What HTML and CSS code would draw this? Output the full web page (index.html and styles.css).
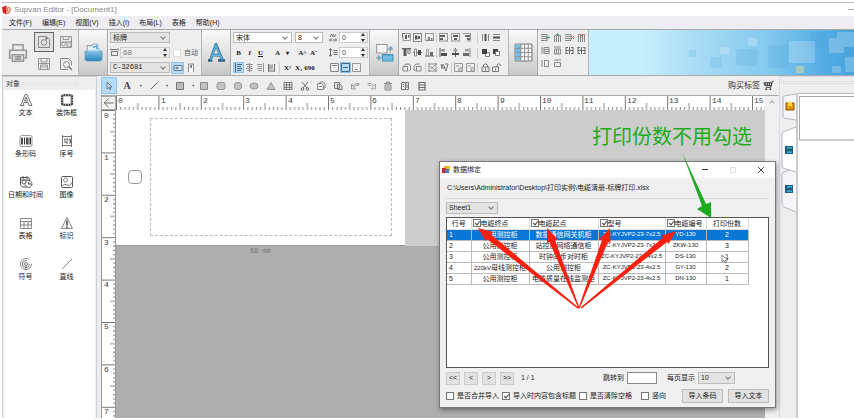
FILE: index.html
```html
<!DOCTYPE html>
<html lang="zh-CN">
<head>
<meta charset="utf-8">
<title>Supvan Editor - [Document1]</title>
<link rel="stylesheet" href="styles.css">
</head>
<body>
<svg class="sprite" aria-hidden="true">
  <defs>
    <linearGradient id="blue" x1="0" y1="0" x2="0" y2="1"><stop offset="0" stop-color="#7cc4e8"/><stop offset="1" stop-color="#2a84bd"/></linearGradient>
    <symbol id="printer" viewBox="0 0 18 18"><path d="M4.5 6V1.5h9V6M3 13.500H1.500V6.500h15v7H15M4 10.500h10v6H4zM6 12.500h6M6 14.500h6" fill="none" stroke="#888" stroke-width="1.400"/></symbol>
    <symbol id="new" viewBox="0 0 14 14"><path d="M1.500 1.500h8l3 3v8h-11z" fill="none" stroke="#777"/><circle cx="7" cy="7.500" r="2.800" fill="none" stroke="#777"/><path d="M8 3.500h3M9.500 2v3" stroke="#777"/></symbol>
    <symbol id="saveas" viewBox="0 0 14 14"><path d="M1.500 1.500h11v11h-11zM4 1.500v3h6v-3M1.500 7h11" fill="none" stroke="#888"/><circle cx="4.500" cy="9" r="2" fill="none" stroke="#888"/><rect x="8" y="7" width="4" height="5" fill="#ddd" stroke="#888"/></symbol>
    <symbol id="save" viewBox="0 0 14 14"><path d="M1.500 1.500h11v11h-11zM4 1.500v3.500h6V1.500M3.500 12V8h7v4M4 10h6M1.500 6.500h11" fill="none" stroke="#888"/></symbol>
    <symbol id="preview" viewBox="0 0 14 14"><path d="M9 12.500H1.500v-11h8l3 3V8" fill="none" stroke="#777"/><circle cx="7.500" cy="7.500" r="3" fill="none" stroke="#777"/><path d="M9.500 9.500l3.500 3.500" stroke="#666" stroke-width="1.400"/></symbol>
    <symbol id="open" viewBox="0 0 18 18"><path d="M3 9V2.500h4L9 1h3v8" fill="#eef4f7" stroke="#8ba6b5"/><path d="M8 3l6-1-1 2 3 4-3-1-2-3-2 1z" fill="#64b5de"/><path d="M1 8h16v7q0 2-2 2H3q-2 0-2-2z" fill="url(#blue)" stroke="#4285aa" stroke-width=".6"/><path d="M3 8l2-2h9l1 2" fill="#b8dff2"/></symbol>
    <symbol id="bigA" viewBox="0 0 18 18"><path d="M1 16.500h4M10.500 16.500H17M3.200 16L8.500 1.500 14.500 16M5 11.500h7" fill="none" stroke="#2c6283" stroke-width="2.600"/><path d="M3.200 16L8.500 2l6 14M5 11.500h7" fill="none" stroke="#56b5e2" stroke-width="1.500"/></symbol>
    <symbol id="swap" viewBox="0 0 18 18"><path d="M1.500 1.500h10v8h-10zM11.500 6H17M14.500 3v6" fill="#f5f5f5" stroke="#999"/><path d="M7 11h10v6H7z" fill="#72bee4" stroke="#428fb5"/><path d="M1 14h5M3.500 11.500v5" stroke="#888"/><path d="M13 5l2-2 2 2-2 2zM2 14l2-2 2 2-2 2z" fill="#5eafd5"/></symbol>
    <symbol id="bigtable" viewBox="0 0 18 18"><rect x="1" y="1" width="16" height="16" rx="1" fill="#f4f4f4" stroke="#777"/><path d="M1.500 1.500h5v15h-5z" fill="#6fc0e8"/><path d="M1 5h16M1 9h16M1 13h16M6.500 1v16M10 1v16M13.500 1v16" stroke="#888" stroke-width=".8"/></symbol>
    <symbol id="width" viewBox="0 0 9 9"><path d="M1.500 3.500h6v4h-6zM1 1.500h7M1 .5v2M8 .5v2" fill="none" stroke="#666"/></symbol>
    <symbol id="landscape" viewBox="0 0 10 10"><path d="M1 2.500h8v5H1z" fill="#d9eefb" stroke="#567"/><path d="M2.500 5h3" stroke="#345" stroke-width="1.500"/></symbol>
    <symbol id="portrait" viewBox="0 0 10 10"><path d="M2.500 9V1h5v8" fill="#fff" stroke="#777"/><path d="M5 2v3" stroke="#345" stroke-width="1.500"/></symbol>
    <symbol id="tl" viewBox="0 0 9 9"><path d="M.5 4.500v-4h4" fill="none" stroke="#555"/><path d="M3 .5h5.500v7H1v-4" fill="none" stroke="#888"/><path d="M3 2h2v4H3zM6 2h1.500v2.500H6z" fill="#444"/></symbol>
    <symbol id="tc" viewBox="0 0 9 9"><rect x=".5" y=".5" width="8" height="8" fill="none" stroke="#777"/><path d="M2 2.500h2.500v4H2zM5 3h2v3H5z" fill="#444"/></symbol>
    <symbol id="tb" viewBox="0 0 9 9"><rect x=".5" y=".5" width="8" height="7" fill="none" stroke="#888"/><path d="M3 4h2v4H3zM6 5h1.500v3H6z" fill="#666"/></symbol>
    <symbol id="at" viewBox="0 0 9 9"><path d="M0 .8h9" stroke="#444" stroke-width="1.400"/><path d="M1.500 1v7h3V1" fill="#444"/><path d="M6 1.500h2v4H6z" fill="none" stroke="#777"/></symbol>
    <symbol id="am" viewBox="0 0 9 9"><path d="M0 4.500h9" stroke="#444"/><path d="M1.500 1h2v7h-2z" fill="#fff" stroke="#777"/><path d="M5 2h3v5H5z" fill="#333"/></symbol>
    <symbol id="ab" viewBox="0 0 9 9"><path d="M0 8h9" stroke="#444"/><path d="M1.500 1.500h2V8h-2z" fill="none" stroke="#888"/><path d="M5 4h3v4H5z" fill="#555"/></symbol>
    <symbol id="al" viewBox="0 0 9 9"><path d="M1 0v9" stroke="#444"/><path d="M2 1h4v2.500H2z" fill="#888"/><path d="M2 5h6v3H2z" fill="#333"/></symbol>
    <symbol id="ac" viewBox="0 0 9 9"><path d="M4.500 0v9" stroke="#444"/><path d="M2.500 1h4v2.500h-4z" fill="#999"/><path d="M1 5h7v2H1z" fill="#333"/></symbol>
    <symbol id="ar" viewBox="0 0 9 9"><path d="M8 0v9" stroke="#777"/><path d="M3 1h4v2.500H3z" fill="#999"/><path d="M1 5h6v3H1z" fill="#555"/></symbol>
    <symbol id="bl" viewBox="0 0 9 9"><rect x=".5" y=".5" width="8" height="7.500" fill="none" stroke="#888"/><path d="M1 2h5v2H1zM1 5h3v2H1z" fill="#444"/></symbol>
    <symbol id="bc" viewBox="0 0 9 9"><rect x=".5" y=".5" width="8" height="7.500" fill="none" stroke="#888"/><path d="M2 2h5v2H2zM3 5h3v2H3z" fill="#444"/></symbol>
    <symbol id="br" viewBox="0 0 9 9"><path d="M.5 .5h8V8h-4" fill="none" stroke="#888"/><path d="M3 2h5v2H3zM5 5h3v2H5z" fill="#555"/></symbol>
    <symbol id="dh" viewBox="0 0 9 9"><path d="M1.500 1v7M7.500 1v7" stroke="#777"/><path d="M4.500 1v7" stroke="#333" stroke-width="2"/></symbol>
    <symbol id="dv" viewBox="0 0 9 9"><path d="M1 1.500h7M1 7.500h7" stroke="#777"/><path d="M1 4.500h7" stroke="#333" stroke-width="2"/></symbol>
    <symbol id="front" viewBox="0 0 9 9"><path d="M4.500 4.500h4v4h-4z" fill="#fff" stroke="#666"/><path d="M1 1h5v5H1z" fill="#222"/></symbol>
    <symbol id="back" viewBox="0 0 9 9"><path d="M1 1h5v5H1z" fill="#222"/><path d="M3.500 3.500h4v4h-4z" fill="#fff" stroke="#666"/></symbol>
    <symbol id="rotl" viewBox="0 0 9 9"><path d="M1 3.500h4.500V8H1zM1.500 3L4 1h3l1.500 2v4l-2 1" fill="none" stroke="#777"/></symbol>
    <symbol id="rotr" viewBox="0 0 9 9"><path d="M3.500 3.500H8V8H3.500zM3 8L1 7V3l2-2h4" fill="none" stroke="#777"/></symbol>
    <symbol id="group" viewBox="0 0 9 9"><path d="M1 0v9M8 0v9M0 1h9M0 8h9M2 3l5 4M3 6l4-4" stroke="#777" fill="none" stroke-width=".9"/></symbol>
    <symbol id="ungroup" viewBox="0 0 9 9"><path d="M1 1l1 4 1-4 2 4M4 4l2 4 2-7M5 1h3M1 5h3" stroke="#666" fill="none"/></symbol>
    <symbol id="pic" viewBox="0 0 9 9"><path d="M.5 .5h8v8h-8zM5 5h3v3H5zM2 3h3" stroke="#888" fill="none"/></symbol>
    <symbol id="lock" viewBox="0 0 9 9"><path d="M1 4h7v4.500H1zM2.500 4V2q2-2.500 4 0v2M4.500 5.500v2" stroke="#555" fill="none" stroke-width=".9"/></symbol>
    <symbol id="unlock" viewBox="0 0 9 9"><path d="M.5 4h6v4.500h-6zM5 4V2q1.500-2.500 3.500 0v1M3.500 5.500v2" stroke="#555" fill="none" stroke-width=".9"/></symbol>
    <symbol id="rowins" viewBox="0 0 9 9"><path d="M0 1.500h6v2H0M0 7.500h6v-2H0" fill="none" stroke="#777"/><path d="M5 4.500h4M7 3v3" stroke="#388e6b"/></symbol>
    <symbol id="colins" viewBox="0 0 9 9"><path d="M1.500 9V2.500h2V9M7.500 9V2.500h-2V9" fill="none" stroke="#777"/><path d="M3 1.500h3M4.500 0v3" stroke="#388e6b"/></symbol>
    <symbol id="rowdel" viewBox="0 0 9 9"><path d="M0 1.500h6v2H0M0 7.500h6v-2H0" fill="none" stroke="#777"/><path d="M6 3l3 3M9 3L6 6" stroke="#b33"/></symbol>
    <symbol id="coldel" viewBox="0 0 9 9"><path d="M1.500 9V1.500h2V9M7.500 9V1.500h-2V9" fill="none" stroke="#777"/><path d="M3 1l3 3M6 1L3 4" stroke="#b33"/></symbol>
    <symbol id="rowsel" viewBox="0 0 9 9"><path d="M1 1v7M3 1.500h5v6H3zM3 3.500h5M3 5.500h5" fill="none" stroke="#777"/></symbol>
    <symbol id="colsel" viewBox="0 0 9 9"><path d="M1 1h7M1.500 3h6v5h-6zM3.500 3v5M5.500 3v5" fill="none" stroke="#777"/></symbol>
    <symbol id="merge" viewBox="0 0 9 9"><path d="M1 1v7M8 1v7M4.500 1v7M1 4.500h7M1 1.500h2M6 1.500h2M1 7.500h2M6 7.500h2" fill="none" stroke="#555"/></symbol>
    <symbol id="roww" viewBox="0 0 9 9"><path d="M1 1v7M3.500 1.500h4v6h-4z" fill="none" stroke="#777"/></symbol>
    <symbol id="colw" viewBox="0 0 9 9"><path d="M1 1h7M1.500 3.500h6v4h-6z" fill="none" stroke="#777"/></symbol>
    <symbol id="left" viewBox="0 0 9 9"><path d="M1.500 0v9M3 1.500h5M3 3.500h4M3 5.500h5M3 7.500h4" stroke="#357"/></symbol>
    <symbol id="center" viewBox="0 0 9 9"><path d="M4.500 0v9M1 1.500h7M2 3.500h5M1 5.500h7M2 7.500h5" stroke="#777" stroke-width=".9"/></symbol>
    <symbol id="right" viewBox="0 0 9 9"><path d="M7.500 0v9M1 1.500h5M2 3.500h4M1 5.500h5M2 7.500h4" stroke="#777" stroke-width=".9"/></symbol>
    <symbol id="just" viewBox="0 0 9 9"><path d="M1.500 1v7.500M7.500 1v7.500M3 1.500v5M5 1.500v5M1 8h7" stroke="#555" fill="none"/></symbol>
    <symbol id="kern" viewBox="0 0 9 9"><path d="M1 4l1.500-3L4 4M4 1l1.500 3L7 1M0 7h8M2 5.500L.5 7 2 8.500M6 5.500L7.500 7 6 8.500" stroke="#555" fill="none" stroke-width=".9"/></symbol>
    <symbol id="lead" viewBox="0 0 9 9"><path d="M1.500 1v7M0 2.500l1.500-2 1.500 2M0 6.500l1.500 2 1.500-2M4.500 2.500h4M4.500 4.500h4M4.500 6.500h4" stroke="#555" fill="none"/></symbol>
    <symbol id="vt" viewBox="0 0 9 9"><path d="M.5 .5h8v8h-8zM2 2.500h5" stroke="#777" fill="none"/></symbol>
    <symbol id="vm" viewBox="0 0 9 9"><path d="M.5 .5h8v8h-8zM2 4.500h5" stroke="#357" fill="none"/></symbol>
    <symbol id="vb" viewBox="0 0 9 9"><path d="M.5 .5h8v8h-8zM3 6.500h3" stroke="#888" fill="none"/></symbol>
    <symbol id="cursor" viewBox="0 0 10 10"><path d="M3 1v7l1.500-1.500L6 9l1-1-1.500-2H8z" fill="#cde" stroke="#567" stroke-width=".8"/></symbol>
    <symbol id="line" viewBox="0 0 10 10"><path d="M1.500 8.500l7-7" stroke="#666"/></symbol>
    <symbol id="square" viewBox="0 0 10 10"><path d="M1.500 1.500h7v7h-7z" fill="#bbb" stroke="#777"/></symbol>
    <symbol id="round" viewBox="0 0 10 10"><rect x="1" y="1.500" width="8" height="7" rx="2" fill="#bbb" stroke="#888"/></symbol>
    <symbol id="circle" viewBox="0 0 10 10"><circle cx="5" cy="5" r="3.700" fill="#bbb" stroke="#888"/></symbol>
    <symbol id="ellipse" viewBox="0 0 10 10"><ellipse cx="5" cy="5" rx="4" ry="3" fill="#bbb" stroke="#888"/></symbol>
    <symbol id="tri" viewBox="0 0 10 10"><path d="M5 1.500l4 7H1z" fill="#bbb" stroke="#888"/></symbol>
    <symbol id="grid" viewBox="0 0 10 10"><path d="M1 1.500h8v7H1zM1 4h8M1 6.500h8M3.500 1.500v7M6.500 1.500v7" fill="none" stroke="#666"/></symbol>
    <symbol id="cut" viewBox="0 0 10 10"><path d="M2 1l5 6M8 1L3 7" stroke="#555"/><circle cx="2.500" cy="8" r="1.300" fill="none" stroke="#555"/><circle cx="7.500" cy="8" r="1.300" fill="none" stroke="#555"/></symbol>
    <symbol id="copy" viewBox="0 0 10 10"><path d="M1.500 2.500h4l2 2v4h-6zM4 2V1h3l2 2v4H8M3 5.500h3" fill="none" stroke="#777"/></symbol>
    <symbol id="paste" viewBox="0 0 10 10"><path d="M1.500 1.500h5v6h-5zM4.500 3.500h3l1.500 2v3H4.500z" fill="#ddd" stroke="#666"/></symbol>
    <symbol id="undo" viewBox="0 0 10 10"><path d="M1.500 3v5h4L4 6.500Q5 4 9 4V2.500Q4.500 2 3 5z" fill="#ddd" stroke="#777" stroke-width=".8"/></symbol>
    <symbol id="redo" viewBox="0 0 10 10"><path d="M8.500 3v5h-4L6 6.500Q5 4 1 4V2.500Q5.500 2 7 5z" fill="#eee" stroke="#888" stroke-width=".8"/></symbol>
    <symbol id="trash" viewBox="0 0 10 10"><path d="M1 2.500h8M3.500 2V1h3v1M2 4h6v5H2zM4 5v3M6 5v3" fill="none" stroke="#777"/></symbol>
    <symbol id="form" viewBox="0 0 10 10"><path d="M1.500 1.500h7v7h-7zM5.500 1.500v7M3 3.500h1M3 5.500h1M7 3v4" fill="none" stroke="#666"/></symbol>
    <symbol id="stack" viewBox="0 0 10 10"><path d="M2 1.500h6v7.500H2zM2 4h6M2 6.500h6" fill="none" stroke="#555" stroke-width="1.200"/></symbol>
    <symbol id="cart" viewBox="0 0 12 12"><path d="M11.500 1.500H10L8.500 8H3M1 3h8.500L9 6H2zM3 3v3M5 3v3M7 3v3" fill="none" stroke="#333"/><circle cx="3.500" cy="10" r="1" fill="#333"/><circle cx="8" cy="10" r="1" fill="#333"/></symbol>
    <symbol id="o-text" viewBox="0 0 14 14"><path d="M1 12.500h4L4.500 11 5 9.500h4l1 3h3L8 1.500H6L2.500 11zM5.500 8L7 4l1.500 4z" fill="#f4f4f4" stroke="#666" stroke-width=".9"/></symbol>
    <symbol id="o-frame" viewBox="0 0 14 14"><rect x="2" y="2" width="10" height="10" rx="1.500" fill="none" stroke="#444" stroke-width="2.200" stroke-dasharray="2 .6"/><rect x="3" y="3" width="8" height="8" fill="#fff" stroke="#666" stroke-width=".6"/></symbol>
    <symbol id="o-bar" viewBox="0 0 14 14"><rect x="1" y="1.500" width="12" height="11" rx="1.500" fill="none" stroke="#999"/><path d="M3 3.500v7M8 3.500v7" stroke="#222" stroke-width="1.600"/><path d="M5.500 3.500v7M10 3.500v7M11.500 3.500v7" stroke="#333"/></symbol>
    <symbol id="o-serial" viewBox="0 0 14 14"><path d="M2 2.500h10M2 11.500h10M2.500 1v12M11.500 1v12" stroke="#777"/><path d="M4 5h1v4M6 5h2L6 9h2M9 5h1.500v4H9M9 7h1" fill="none" stroke="#555" stroke-width=".9"/></symbol>
    <symbol id="o-date" viewBox="0 0 14 14"><path d="M9 12H4l-2.500-2V2.500h8l2 3M2 5h9M4 1v3M8 1v3" fill="none" stroke="#555"/><circle cx="5" cy="7" r="2" fill="none" stroke="#666"/><circle cx="9.500" cy="9" r="3.500" fill="#eee" stroke="#444" stroke-dasharray="2 .6"/><path d="M9.500 7v2H12" stroke="#444" fill="none"/></symbol>
    <symbol id="o-img" viewBox="0 0 14 14"><rect x="1.500" y="1.500" width="11" height="11" rx="1" fill="none" stroke="#555"/><circle cx="5.500" cy="5" r="2" fill="none" stroke="#888"/><path d="M2 11q3-3 5-1t5-2" fill="none" stroke="#777"/></symbol>
    <symbol id="o-table" viewBox="0 0 14 14"><path d="M1.500 2.500h11v10h-11zM1.500 5.500h11M1.500 9h11M5 5v7.500M9 5v7.500" fill="none" stroke="#888"/></symbol>
    <symbol id="o-sign" viewBox="0 0 14 14"><path d="M7 1.500l5.500 11h-11z" fill="#f8f8f8" stroke="#888"/><path d="M7 4.500v5M7 10.500v1.500" stroke="#444" stroke-width="1.500"/></symbol>
    <symbol id="o-symbol" viewBox="0 0 14 14"><circle cx="7" cy="7" r="5.500" fill="none" stroke="#888" stroke-dasharray="28 6"/><circle cx="7" cy="7" r="3.500" fill="none" stroke="#777" stroke-dasharray="17 5"/><circle cx="7" cy="7" r="1.500" fill="none" stroke="#777"/><path d="M7 8.500v4" stroke="#777"/></symbol>
    <symbol id="o-line" viewBox="0 0 14 14"><path d="M2 12L12 2" stroke="#888"/></symbol>
    <symbol id="chip" viewBox="0 0 9 9"><path d="M0 0h9v9H0z" fill="#155a80"/><path d="M2 1h6v7H2z" fill="#3faad3"/><circle cx="3.500" cy="4.500" r="1.200" fill="none" stroke="#133"/><circle cx="6.500" cy="4.500" r="1.200" fill="none" stroke="#133"/></symbol>
  </defs>
</svg>

<div class="app">
  <header class="titlebar">
    <svg class="logo" viewBox="0 0 10 10"><path d="M0 2L5 0v10L1 8z" fill="#d91f1f"/><path d="M5 1l4 1 1 3-2 4-3 1z" fill="#e97757"/><path d="M6 2l2 2-2 4" fill="none" stroke="#fff"/></svg>
    <span>Supvan Editor - [Document1]</span><i class="minimize"></i>
  </header>
  <nav class="menubar">
    <button>文件(F)</button><button>编辑(E)</button><button>视图(V)</button><button>插入(I)</button><button>布局(L)</button><button>表格</button><button>帮助(H)</button>
  </nav>

  <section class="ribbon">
    <div class="group print">
      <button class="big" aria-label="打印"><svg><use href="#printer"/></svg></button>
      <div class="files">
        <button class="framed" aria-label="新建"><svg><use href="#new"/></svg></button>
        <button aria-label="另存为"><svg><use href="#saveas"/></svg></button>
        <button aria-label="保存"><svg><use href="#save"/></svg></button>
        <button aria-label="预览"><svg><use href="#preview"/></svg></button>
      </div>
    </div>
    <button class="tile" aria-label="打开"><svg><use href="#open"/></svg></button>
    <div class="group doc">
      <span class="pick grey"><select aria-label="类型"><option>标牌</option></select></span>
      <div class="line">
        <svg class="ic"><use href="#width"/></svg>
        <span class="spin wide"><input type="text" value="68" aria-label="宽度"><i></i></span>
        <label class="auto"><input type="checkbox">自动</label>
      </div>
      <div class="line">
        <span class="pick grey mono"><select aria-label="型号"><option>C-32681</option></select></span>
        <button class="on orient" aria-label="横向"><svg><use href="#landscape"/></svg></button>
        <button class="orient" aria-label="纵向"><svg><use href="#portrait"/></svg></button>
      </div>
    </div>
    <button class="tile" aria-label="字体"><svg><use href="#bigA"/></svg></button>
    <div class="group font">
      <div class="line fonts">
        <span class="pick family"><select aria-label="字体"><option>宋体</option></select></span>
        <span class="pick size"><select aria-label="字号"><option>8</option></select></span>
      </div>
      <div class="line letters">
        <button>B</button><button class="it">I</button><button class="un">U</button><button class="gap">A</button><button class="dot">▾</button><button class="gap">A<sup>^</sup></button><button>A<sup>ˇ</sup></button>
      </div>
      <div class="line letters">
        <button class="on" aria-label="左对齐"><svg><use href="#left"/></svg></button><button aria-label="居中"><svg><use href="#center"/></svg></button><button aria-label="右对齐"><svg><use href="#right"/></svg></button><button aria-label="两端对齐"><svg><use href="#just"/></svg></button><i class="sep"></i><button>X<sup>²</sup></button><button>X<sub>₂</sub></button><button>690</button>
      </div>
    </div>
    <div class="group spacing">
      <div class="line"><svg class="ic"><use href="#kern"/></svg><span class="spin"><input type="text" value="0" aria-label="字间距"><i></i></span></div>
      <div class="line"><svg class="ic"><use href="#lead"/></svg><span class="spin"><input type="text" value="0" aria-label="行间距"><i></i></span></div>
      <div class="line letters"><button aria-label="顶部"><svg><use href="#vt"/></svg></button><button class="on" aria-label="中部"><svg><use href="#vm"/></svg></button><button aria-label="底部"><svg><use href="#vb"/></svg></button></div>
    </div>
    <button class="tile" aria-label="位置"><svg><use href="#swap"/></svg></button>
    <div class="group align">
      <div class="icons"><svg><use href="#tl"/></svg><svg><use href="#tc"/></svg><svg><use href="#tb"/></svg><i class="sep"></i><svg><use href="#bl"/></svg><svg><use href="#bc"/></svg><svg><use href="#br"/></svg><i class="sep far"></i><svg><use href="#dh"/></svg><svg><use href="#dv"/></svg></div>
      <div class="icons"><svg><use href="#at"/></svg><svg><use href="#am"/></svg><svg><use href="#ab"/></svg><i class="sep"></i><svg><use href="#al"/></svg><svg><use href="#ac"/></svg><svg><use href="#ar"/></svg><i class="sep far"></i><svg><use href="#front"/></svg><svg><use href="#back"/></svg></div>
      <div class="icons"><svg><use href="#rotl"/></svg><svg><use href="#rotr"/></svg><i class="sep"></i><svg><use href="#group"/></svg><svg><use href="#ungroup"/></svg><i class="sep"></i><svg><use href="#pic"/></svg><svg><use href="#pic"/></svg><i class="sep"></i><svg><use href="#lock"/></svg><svg><use href="#unlock"/></svg></div>
    </div>
    <button class="tile" aria-label="表格"><svg><use href="#bigtable"/></svg></button>
    <div class="group cells">
      <svg><use href="#rowins"/></svg><svg><use href="#colins"/></svg><svg><use href="#rowdel"/></svg><svg><use href="#coldel"/></svg>
      <svg><use href="#rowsel"/></svg><svg><use href="#colsel"/></svg><svg><use href="#merge"/></svg><svg><use href="#merge"/></svg>
      <svg><use href="#roww"/></svg><svg><use href="#colw"/></svg>
    </div>
    <div class="banner">
      <svg viewBox="0 0 265 45" preserveAspectRatio="xMaxYMid slice">
        <g fill="#3f9bd6" opacity=".16"><rect x="147" y="19" width="21" height="17" rx="2"/><rect x="121" y="27" width="12" height="11" rx="1"/><rect x="100" y="20" width="7" height="7" rx="1"/><rect x="179" y="15" width="21" height="23" rx="2"/><rect x="220" y="2" width="17" height="17" rx="2"/></g>
        <g fill="#fff" opacity=".22"><rect x="200" y="11" width="26" height="22" rx="2"/><rect x="159" y="8" width="9" height="8" rx="1"/><rect x="131" y="17" width="9" height="7" rx="1"/><rect x="240" y="8" width="15" height="15" rx="1"/><rect x="248" y="2" width="17" height="15" rx="1"/><rect x="256" y="27" width="11" height="15" rx="1"/><rect x="243" y="36" width="9" height="7" rx="1"/></g>
        <rect x="207" y="36" width="8" height="7" fill="#c8cfae" opacity=".7"/>
      </svg>
    </div>
  </section>

  <main class="work">
    <aside class="objects">
      <h2>对象<i></i></h2>
      <div class="list">
        <button><svg><use href="#o-text"/></svg>文本</button><button><svg><use href="#o-frame"/></svg>装饰框</button>
        <button><svg><use href="#o-bar"/></svg>条形码</button><button><svg><use href="#o-serial"/></svg>序号</button>
        <button><svg><use href="#o-date"/></svg>日期和时间</button><button><svg><use href="#o-img"/></svg>图像</button>
        <button><svg><use href="#o-table"/></svg>表格</button><button><svg><use href="#o-sign"/></svg>标识</button>
        <button><svg><use href="#o-symbol"/></svg>符号</button><button><svg><use href="#o-line"/></svg>直线</button>
      </div>
    </aside>

    <section class="editor">
      <div class="tools">
        <button class="on" aria-label="选择"><svg><use href="#cursor"/></svg></button>
        <div class="menus"><button class="serif">A</button><b>·</b><button aria-label="直线"><svg><use href="#line"/></svg></button><b>·</b><button aria-label="填充"><svg><use href="#square"/></svg></button><b>·</b></div>
        <div class="shapes">
          <svg><use href="#square"/></svg><svg><use href="#round"/></svg><svg><use href="#circle"/></svg><svg><use href="#ellipse"/></svg><svg><use href="#tri"/></svg><svg><use href="#grid"/></svg><svg><use href="#cut"/></svg><svg><use href="#copy"/></svg><svg><use href="#paste"/></svg><svg><use href="#undo"/></svg><svg><use href="#redo"/></svg><svg><use href="#trash"/></svg><svg><use href="#form"/></svg><svg><use href="#stack"/></svg>
        </div>
        <a class="buy" href="#">购买标签<svg><use href="#cart"/></svg></a>
      </div>
      <div class="stage">
        <svg class="corner" viewBox="0 0 14 14"><path d="M13 7H2M7 2L2 7l5 5" fill="none" stroke="#555"/></svg>
        <svg class="hruler">
          <defs><pattern id="hticks" width="42.400" height="14" patternUnits="userSpaceOnUse"><path d="M.5 0v14" stroke="#777"/><path d="M4.700 11v3M9 11v3M13.200 11v3M17.500 11v3M21.700 7v7M26 11v3M30.200 11v3M34.400 11v3M38.700 11v3" stroke="#888"/></pattern></defs>
          <rect width="100%" height="14" fill="url(#hticks)"/>
          <g><text x="2" y="7">0</text><text x="45" y="7">1</text><text x="87" y="7">2</text><text x="129" y="7">3</text><text x="172" y="7">4</text><text x="214" y="7">5</text><text x="256" y="7">6</text><text x="299" y="7">7</text><text x="341" y="7">8</text><text x="384" y="7">9</text><text x="426" y="7">10</text><text x="468" y="7">11</text><text x="511" y="7">12</text><text x="553" y="7">13</text><text x="596" y="7">14</text><text x="638" y="7">15</text></g>
        </svg>
        <svg class="vruler">
          <defs><pattern id="vticks" width="14" height="42.400" patternUnits="userSpaceOnUse"><path d="M0 .5h14" stroke="#777"/><path d="M11 4.700h3M11 9h3M11 13.200h3M11 17.500h3M8 21.700h6M11 26h3M11 30.200h3M11 34.400h3M11 38.700h3" stroke="#888"/></pattern></defs>
          <rect width="14" height="100%" fill="url(#vticks)"/>
          <g><text x="2" y="8">0</text><text x="2" y="50">1</text><text x="2" y="92">2</text><text x="2" y="135">3</text><text x="2" y="177">4</text><text x="2" y="219">5</text><text x="2" y="262">6</text><text x="2" y="304">7</text></g>
        </svg>
        <div class="canvas">
          <div class="sheet"><div class="page"><i class="hole"></i><div class="area"></div></div></div>
          <p class="measure">68 mm</p>
        </div>
        <div class="scroll"><i></i></div>
      </div>
    </section>

    <aside class="side">
      <i class="grip"></i>
      <div class="pane">
        <div class="tabs">
          <svg viewBox="0 0 15 126" preserveAspectRatio="none"><g fill="#f6f6f8" stroke="#b8b8be"><path d="M15 1L3 3q-1 0-1 2v18q0 2 1 2l12 2"/><path d="M15 75L3 79q-2 1-2 3v28q0 3 2 4l12 5"/><path d="M15 34L2 39q-1 0-1 3v29q0 3 1 4l13 4" fill="#fff"/></g>
            <path d="M5 10h8v7H5z" fill="#e8980e" stroke="#8a4d09"/><path d="M7 9h4v4H7z" fill="#ffdc38"/></svg>
          <svg class="chip"><use href="#chip"/></svg><svg class="chip"><use href="#chip"/></svg>
        </div>
        <div class="sheetlist"><div class="thumb"></div></div>
      </div>
    </aside>
  </main>

  <section class="dialog" role="dialog" aria-label="数据绑定">
    <header>
      <svg class="form-ico" viewBox="0 0 8 8"><rect x="2" y="0" width="6" height="5" fill="#f1b32b"/><rect y="2" width="4" height="5" fill="#b33526"/><rect x="3" y="3" width="4" height="4" fill="#4c7cc0"/></svg>
      <span>数据绑定</span>
      <button aria-label="最小化"><svg viewBox="0 0 8 8"><path d="M1 3.500h6" stroke="#333"/></svg></button>
      <button aria-label="最大化"><svg viewBox="0 0 8 8"><path d="M1.500 1.500h5v5h-5z" fill="none" stroke="#ddd"/></svg></button>
      <button aria-label="关闭"><svg viewBox="0 0 8 8"><path d="M1 1l6 6M7 1L1 7" stroke="#444"/></svg></button>
    </header>
    <div class="body">
      <p class="path">C:\Users\Administrator\Desktop\打印实例\电缆清册-标牌打印.xlsx</p>
      <hr>
      <span class="pick grey sheetpick"><select aria-label="工作表"><option>Sheet1</option></select></span>
      <div class="grid">
        <table>
          <colgroup><col class="c1"><col class="c2"><col class="c3"><col class="c4"><col class="c5"><col class="c6"></colgroup>
          <thead><tr><th>行号</th><th class="tick"><label><input type="checkbox" checked>电缆终点</label></th><th class="tick"><label><input type="checkbox" checked>电缆起点</label></th><th class="tick"><label><input type="checkbox" checked>型号</label></th><th class="tick"><label><input type="checkbox" checked>电缆编号</label></th><th>打印份数</th></tr></thead>
          <tbody>
            <tr class="selected"><td>1</td><td>公用测控柜</td><td>数据通信网关机柜</td><td class="latin">ZC-KYJVP2-23-7x2.5</td><td class="latin">YD-130</td><td>2</td></tr>
            <tr><td>2</td><td>公用测控柜</td><td>站控层网络通信柜</td><td class="latin">ZC-KYJVP2-23-7x2.5</td><td class="latin">ZKW-130</td><td>3</td></tr>
            <tr><td>3</td><td>公用测控柜</td><td>时钟同步对时柜</td><td class="latin">ZC-KYJVP2-23-14x2.5</td><td class="latin">DS-130</td><td>1</td></tr>
            <tr><td>4</td><td><span class="latin">220kV</span>母线测控柜</td><td>公用测控柜</td><td class="latin">ZC-KYJVP2-23-4x2.5</td><td class="latin">GY-130</td><td>2</td></tr>
            <tr><td>5</td><td>公用测控柜</td><td>电能质量在线监测柜</td><td class="latin">ZC-KYJVP2-23-4x2.5</td><td class="latin">DN-130</td><td>1</td></tr>
          </tbody>
        </table>
      </div>
      <div class="pager">
        <button>&lt;&lt;</button><button>&lt;</button><button>&gt;</button><button>&gt;&gt;</button><span>1 / 1</span>
        <label class="jump">跳转到<input type="text"></label>
        <label class="per">每页显示<span class="pick grey"><select><option>10</option></select></span></label>
      </div>
      <div class="options">
        <label><input type="checkbox">是否合并导入</label>
        <label><input type="checkbox" checked>导入时内容包含标题</label>
        <label><input type="checkbox">是否清除空格</label>
        <label class="vertical"><input type="checkbox">竖向</label>
        <button>导入条码</button><button>导入文本</button>
      </div>
    </div>
    <svg class="arrows" viewBox="0 0 337 246">
      <g fill="#f9200f">
        <path d="M38 66L53 70 51 72.400 138.500 145.500 137.500 146.500 47 77 45.500 79z"/>
        <path d="M107 66L117.500 77 115 78 139.500 146 138.500 146.500 109.500 80 107 81z"/>
        <path d="M170 66L170.500 81 168 80 139.500 146.500 138.500 146 162 78 159.500 77z"/>
        <path d="M236 69L228.500 82 227 80 141.500 146.500 140.500 145.500 223 75.500 221.500 73.500z"/>
      </g>
    </svg>
    <svg class="pointer" viewBox="0 0 8 10"><path d="M1 1v7l2-1.500L4 9l1.500-.5L4.500 6H7z" fill="#fff" stroke="#555" stroke-width=".7"/></svg>
  </section>
  <div class="note">
    <p>打印份数不用勾选</p>
    <svg viewBox="0 0 36 68"><path d="M4 1l24 52 5-2 0 16-14-9 5-3z" fill="#1dab1d"/></svg>
  </div>
</div>
</body>
</html>
```
FILE: styles.css
```css
* { box-sizing: border-box; }
body { margin: 0; background: #fff; color: #222; font: 7px/10px "Liberation Sans", "Noto Sans CJK SC", sans-serif; }
button, input, select { font: inherit; color: inherit; margin: 0; padding: 0; border: 0; background: none; border-radius: 0; }
button { display: flex; align-items: center; justify-content: center; white-space: nowrap; }
svg { display: block; flex: none; }
p, h2 { margin: 0; }
.sprite { position: absolute; width: 0; height: 0; }
.app { position: relative; display: flex; flex-direction: column; height: 100vh; padding: 2px 0 2px 2px; overflow: hidden; }

.titlebar { display: flex; align-items: center; gap: 3px; height: 14px; border-top: 1px solid #bbb; color: #888; font: 8px/12px "Liberation Sans", sans-serif; }
.logo { width: 9px; height: 10px; }
.minimize { width: 6px; height: 1px; margin-left: auto; background: #aaa; }
.menubar { display: flex; gap: 10px; height: 13px; padding-left: 7px; background: #eeedf2; }

.ribbon { display: flex; height: 47px; flex: none; background: #eee; border-top: 1px solid #aaa; border-bottom: 1px solid #aaa; }
.group { flex: none; border-right: 1px solid #b5b5b5; }
.group svg { opacity: .85; }
.print { display: flex; width: 77px; align-items: center; padding-left: 6px; gap: 6px; }
.big svg { width: 20px; height: 20px; }
.files { display: grid; grid-template-columns: 20px 20px; gap: 2px; }
.files button { height: 20px; }
.files .framed { border: 1px solid #666; background: #e3e3e3; }
.files svg { width: 14px; height: 14px; }
.tile { width: 29px; flex: none; background: linear-gradient(#fafafa, #e2e2e2 50%, #c8c8c8); border-right: 1px solid #aaa; }
.tile svg { width: 19px; height: 19px; }
.line { display: flex; align-items: center; height: 11px; }
.ic { width: 9px; height: 9px; }
.doc { display: flex; flex-direction: column; gap: 4px; width: 94px; padding: 2px 0 0 2px; }
.pick { position: relative; display: block; height: 11px; border: 1px solid #bbb; background: #fff; }
.pick select { display: block; width: 100%; height: 9px; padding-left: 2px; appearance: none; line-height: 9px; }
.pick::after { content: ""; position: absolute; right: 4px; top: 2px; width: 3px; height: 3px; border: solid #777; border-width: 0 1px 1px 0; transform: rotate(45deg); pointer-events: none; }
.grey { background: #e4e4e4; }
.doc .pick { width: 60px; }
.mono { font-family: "Liberation Mono", monospace; }
.spin { display: flex; align-items: center; width: 29px; height: 11px; border: 1px solid #ccc; background: #fff; }
.spin input { flex: 1; width: 0; height: 9px; padding-left: 2px; font-family: "Liberation Sans", sans-serif; color: #444; }
.spin i { position: relative; width: 7px; height: 9px; background: #eee; }
.spin i::before, .spin i::after { content: ""; position: absolute; left: 1px; border: 2px solid transparent; }
.spin i::before { top: 0; border-top: 0; border-bottom: 3px solid #333; }
.spin i::after { bottom: 0; border-bottom: 0; border-top: 3px solid #333; }
.wide { width: 50px; margin-left: 1px; background: #eee; }
.wide input { font-size: 8px; color: #777; }
.auto { display: flex; align-items: center; gap: 3px; margin-left: 3px; color: #555; }
input[type="checkbox"] { position: relative; appearance: none; flex: none; width: 8px; height: 8px; border: 1px solid #777; background: #fff; }
input[type="checkbox"]:checked::after { content: ""; position: absolute; left: 2px; top: 0; width: 2px; height: 4px; border: solid #444; border-width: 0 1px 1px 0; transform: rotate(40deg); }
.auto input[type="checkbox"] { border-color: #ddd; }
.orient { width: 13px; height: 12px; }
.orient svg { width: 10px; height: 10px; }
.doc .on { margin-left: 1px; }
.on { background: #b5dbf5; outline: 1px solid #8cc4ea; outline-offset: -1px; }

.font { display: flex; flex-direction: column; gap: 4px; width: 95px; padding: 2px 0 0 2px; border-right: 0; }
.fonts { gap: 3px; }
.family { width: 59px; }
.size { width: 28px; }
.letters button { width: 11px; height: 11px; font: bold 7px/10px "Liberation Serif", serif; }
.letters svg { width: 9px; height: 9px; }
.letters .it { font-style: italic; }
.letters .un { text-decoration: underline; }
.letters .gap { margin-left: 6px; }
.letters .dot { width: 8px; font-size: 6px; }
.letters sup, .letters sub { font-size: 6px; line-height: 4px; }
.sep { width: 1px; height: 10px; background: #ccc; margin: 0 2px; }
.spacing { display: flex; flex-direction: column; gap: 4px; width: 44px; padding: 2px 0 0 3px; }
.spacing .spin { margin-left: 1px; }
.align { display: flex; flex-direction: column; justify-content: space-around; width: 110px; padding: 0 7px 0 3px; }
.icons { display: flex; justify-content: space-between; align-items: center; }
.icons svg, .cells svg { width: 9px; height: 9px; }
.icons .sep { margin: 0; }
.icons .far { margin-left: 4px; }
.cells { display: grid; grid-template-columns: repeat(4, 12px); grid-auto-rows: 13px; justify-items: center; align-items: center; width: 51px; padding: 1px 0 0 1px; }
.banner { flex: 1; overflow: hidden; background: linear-gradient(90deg, #c8effd 0 20%, #a9ddf5 40%, #83c8ee 68%, #55aee4 88%, #46a2dd); }
.banner svg { width: 100%; height: 45px; }

.work { display: flex; flex: 1; min-height: 0; background: #eee; }
.objects { display: flex; flex-direction: column; width: 95px; border: 1px solid #ccd0dc; border-bottom: 0; padding: 0 1px; background: #eee; }
.objects h2 { display: flex; align-items: center; gap: 2px; height: 13px; padding-left: 2px; font-size: 7px; font-weight: 400; color: #444; }
.objects h2 i { width: 56px; height: 3px; border: dotted #ddd; border-width: 1px 0; }
.list { flex: 1; display: grid; grid-template-columns: 41px 41px; grid-auto-rows: 41px; background: #fff; padding-left: 1px; }
.list button { flex-direction: column; justify-content: flex-start; gap: 1px; padding-top: 3px; }
.list svg { width: 14px; height: 14px; }
.editor { flex: 1; min-width: 0; display: flex; flex-direction: column; margin-left: 4px; }
.tools { display: flex; align-items: center; height: 20px; flex: none; border-bottom: 1px solid #aaa; }
.tools > .on { width: 16px; height: 17px; }
.tools svg { width: 10px; height: 10px; }
.shapes svg { opacity: .85; }
.menus { display: flex; align-items: center; width: 78px; padding-left: 4px; justify-content: space-between; }
.menus .serif { width: 12px; font: bold 10px/12px "Liberation Serif", serif; color: #444; }
.menus b { font-size: 9px; }
.shapes { display: flex; justify-content: space-between; width: 228px; margin-left: 4px; }
.buy { display: flex; align-items: center; gap: 3px; margin: 0 5px 0 auto; font-size: 8px; color: #333; text-decoration: none; }
.buy svg { width: 11px; height: 11px; }
.stage { flex: 1; min-height: 0; display: grid; grid-template: 14px 1fr / 15px 1fr 14px; }
.corner { width: 15px; height: 14px; border: 1px solid #aaa; background: #f3f3f3; }
.hruler { width: 100%; height: 14px; background: #fff; }
.vruler { width: 15px; height: 100%; background: #fff; border-left: 1px solid #999; border-right: 1px solid #999; }
.stage text { font: 8px "Liberation Mono", monospace; fill: #444; }
.canvas { background: #aeaeae; min-width: 0; }
.sheet { background: #cdcdcd; }
.page { display: flex; align-items: center; gap: 8px; width: 289px; height: 136px; padding: 8px 13px 9px 12px; background: #fff; border-bottom: 1px solid #999; }
.hole { width: 14px; height: 14px; border: 1px solid #999; border-radius: 4px; }
.area { flex: 1; align-self: stretch; border: 1px dashed #bbb; }
.measure { width: 289px; text-align: center; font-family: "Liberation Mono", monospace; color: #777; }
.scroll { grid-area: 1 / 3 / 3 / 4; background: #f0f0f0; display: flex; justify-content: center; padding-top: 5px; }
.scroll i { width: 4px; height: 4px; border: solid #aaa; border-width: 1px 0 0 1px; transform: rotate(45deg); }
.side { display: flex; flex-direction: column; width: 75px; padding-top: 4px; border-left: 1px solid #d9dae8; border-top: 1px solid #d9dae8; }
.grip { height: 3px; margin: 0 0 9px 1px; border: dotted #d5d5d5; border-width: 1px 0; }
.pane { display: flex; flex: 1; }
.tabs { display: grid; width: 16px; height: 126px; padding-left: 1px; }
.tabs svg { grid-area: 1 / 1; width: 15px; height: 126px; }
.tabs .chip { width: 8px; height: 8px; margin: 53px 0 0 4px; }
.tabs .chip + .chip { margin-top: 92px; }
.sheetlist { flex: 1; padding-top: 2px; background: #fff; border-left: 2px solid #ccc; border-top: 1px solid #bbb; }
.thumb { height: 45px; margin-left: 1px; border: 1px solid #aaa; border-right: 0; border-bottom: 2px solid #ccc; }

.dialog { position: absolute; left: 439px; top: 161px; width: 337px; border: 1px solid #777; background: #f0f0f0; box-shadow: 1px 2px 5px rgba(0,0,0,.4); }
.dialog header { display: flex; align-items: center; height: 16px; padding: 0 0 0 2px; background: #fff; }
.dialog header span { margin: 0 auto 0 3px; }
.dialog header button { width: 28px; height: 14px; }
.dialog header svg { width: 8px; height: 8px; }
.body { padding: 5px 6px 4px 6px; }
.path { padding-left: 1px; white-space: nowrap; }
.latin { font-size: 6px; }
.dialog hr { margin: 5px 0 3px; border: 0; border-top: 1px solid #ddd; }
.sheetpick { width: 52px; height: 12px; margin-bottom: 3px; }
.grid { height: 151px; background: #fff; border: 1px solid #555; }
table { width: 301px; table-layout: fixed; border-collapse: collapse; }
.c1 { width: 24px; } .c2 { width: 58px; } .c3 { width: 69px; } .c4 { width: 67px; } .c5 { width: 41px; } .c6 { width: 42px; }
th, td { height: 11px; padding: 0; border: 1px solid #bbb; border-left: 0; font-weight: 400; line-height: 9px; text-align: center; white-space: nowrap; overflow: hidden; }
th { border-top: 0; border-color: #ddd; }
td:first-child { padding-left: 2px; text-align: left; }
.tick label { display: flex; align-items: center; padding-left: 1px; }
.selected td { background: #0a76d6; color: #fff; }
.pager { display: flex; align-items: center; gap: 4px; margin-top: 3px; height: 14px; }
.pager button { width: 14px; height: 13px; border: 1px solid #ccc; background: #e2e2e2; }
.pager > span { margin-left: 3px; }
.jump, .per { display: flex; align-items: center; gap: 3px; }
.jump { margin-left: auto; }
.jump input { width: 30px; height: 12px; border: 1px solid #888; background: #fff; }
.per { margin: 0 34px 0 6px; }
.per .pick { width: 37px; height: 12px; }
.options { display: flex; align-items: center; gap: 3px; margin-top: 3px; height: 15px; }
.options label { display: flex; align-items: center; gap: 3px; white-space: nowrap; }
.options .vertical { margin: 0 auto 0 6px; }
.options button { width: 41px; height: 14px; border: 1px solid #bbb; background: #e2e2e2; }
.options button:last-child { margin-left: 2px; }
.arrows { position: absolute; left: 0; top: 0; width: 337px; height: 246px; pointer-events: none; }
.pointer { position: absolute; left: 281px; top: 92px; width: 8px; height: 10px; }
.note { position: absolute; left: 592px; top: 124px; color: #1dab1d; pointer-events: none; }
.note p { font: 20px/24px "Noto Sans CJK SC", sans-serif; white-space: nowrap; }
.note svg { width: 36px; height: 68px; margin: 3px 0 0 86px; }
```
